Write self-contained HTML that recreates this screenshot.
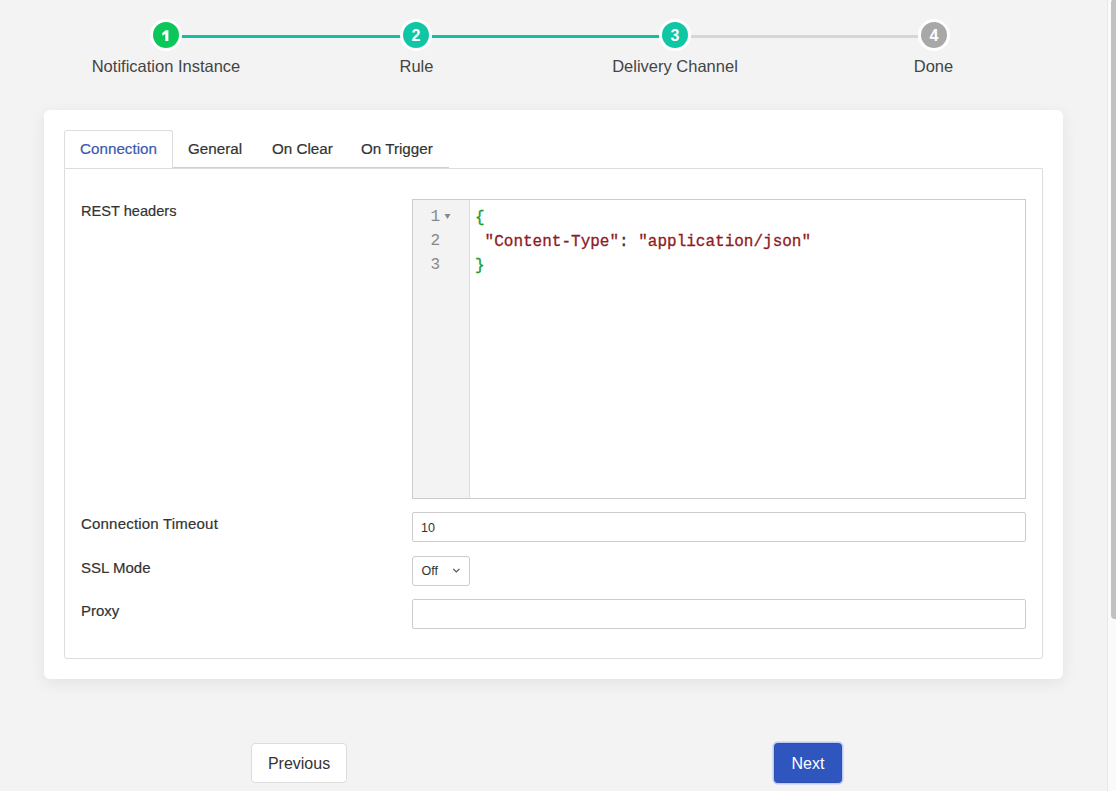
<!DOCTYPE html>
<html><head><meta charset="utf-8">
<style>
html,body{margin:0;padding:0;}
body{width:1116px;height:791px;overflow:hidden;background:#f3f3f3;font-family:"Liberation Sans",sans-serif;color:#333;position:relative;}
.abs{position:absolute;}
.step{position:absolute;top:19px;width:32px;height:32px;border-radius:50%;background:#fff;}
.step .c{position:absolute;left:3px;top:3px;width:26px;height:26px;border-radius:50%;color:#fff;font-weight:bold;font-size:16px;line-height:27px;text-align:center;}
.line{position:absolute;top:35px;height:3px;}
.slabel{position:absolute;top:55.8px;font-size:16.5px;line-height:20px;color:#444;white-space:nowrap;transform:translateX(-50%);}
.card{position:absolute;left:44px;top:110px;width:1019px;height:569px;background:#fff;border-radius:6px;box-shadow:0 4px 16px rgba(0,0,0,0.07);}
.tab{position:absolute;top:130px;height:38px;font-size:15.2px;line-height:37px;color:#333;white-space:nowrap;-webkit-text-stroke:0.2px currentColor;}
.tab.active{border:1px solid #ddd;border-bottom:none;border-radius:3px 3px 0 0;background:#fff;color:#3a5aae;box-sizing:border-box;}
.panel{position:absolute;left:64px;top:168px;width:979px;height:491px;border:1px solid #ddd;border-radius:0 0 3px 3px;box-sizing:border-box;}
.lbl{position:absolute;left:81px;font-size:15px;line-height:18px;color:#333;white-space:nowrap;-webkit-text-stroke:0.2px #333;}
.editor{position:absolute;left:412px;top:199px;width:614px;height:300px;border:1px solid #ccc;box-sizing:border-box;background:#fff;font-family:"Liberation Mono",monospace;font-size:16px;}
.gutter{position:absolute;left:0;top:0;width:56px;height:298px;background:#f3f3f3;border-right:1px solid #ddd;}
.ln{position:absolute;left:0;width:27px;text-align:right;color:#888;line-height:24px;font-size:16px;}
.code{position:absolute;left:62px;line-height:24px;white-space:pre;-webkit-text-stroke:0.3px currentColor;}
.str{color:#8f1a1f;}
.br{color:#1a9a30;}
.input{position:absolute;left:412px;width:614px;height:30px;border:1px solid #ccc;border-radius:2px;box-sizing:border-box;background:#fff;font-size:12.5px;}
.btn{position:absolute;top:743px;height:40px;border-radius:4px;font-size:16px;line-height:40px;text-align:center;box-sizing:border-box;}
</style></head><body>
<!-- stepper -->
<div class="line" style="left:181px;width:220px;background:#12bfa2;"></div>
<div class="line" style="left:431px;width:229px;background:#12bfa2;"></div>
<div class="line" style="left:690px;width:229px;background:#d6d6d6;"></div>
<div class="step" style="left:150px;"><div class="c" style="background:#0bc75a;"><svg class="abs" style="left:0;top:0" width="26" height="26" viewBox="0 0 26 26"><path d="M15.4 8.2 L15.4 19.1 L12.3 19.1 L12.3 12.0 L9.3 13.7 L9.3 11.0 L12.7 8.2 Z" fill="#fff"/></svg></div></div>
<div class="step" style="left:400px;"><div class="c" style="background:#10c6a4;">2</div></div>
<div class="step" style="left:659px;"><div class="c" style="background:#10c6a4;">3</div></div>
<div class="step" style="left:918px;"><div class="c" style="background:#a8a8a8;">4</div></div>
<div class="slabel" style="left:166px;">Notification Instance</div>
<div class="slabel" style="left:416.5px;">Rule</div>
<div class="slabel" style="left:675px;">Delivery Channel</div>
<div class="slabel" style="left:933.5px;">Done</div>

<div class="card"></div>
<div class="panel"></div>
<div class="abs" style="left:173px;top:167px;width:276px;height:1px;background:#cfcfcf;"></div>
<div class="tab active" style="left:64px;width:109px;height:38px;text-align:center;line-height:36px;">Connection</div>
<div class="tab" style="left:188px;">General</div>
<div class="tab" style="left:272px;">On Clear</div>
<div class="tab" style="left:361px;">On Trigger</div>

<div class="lbl" style="top:202px;font-size:14.6px;">REST headers</div>
<div class="editor">
  <div class="gutter">
    <div class="ln" style="top:5px;">1</div>
    <div class="ln" style="top:29px;">2</div>
    <div class="ln" style="top:53px;">3</div>
    <svg class="abs" style="left:31px;top:13px;" width="7" height="7" viewBox="0 0 7 7"><path d="M0.5 1 L6.5 1 L3.5 6 Z" fill="#888"/></svg>
  </div>
  <div class="code" style="top:6px;"><span class="br">{</span>
 <span class="str">"Content-Type"</span>: <span class="str">"application/json"</span>
<span class="br">}</span></div>
</div>

<div class="lbl" style="top:515px;letter-spacing:0.2px;">Connection Timeout</div>
<div class="input" style="top:512px;"><span class="abs" style="left:8px;top:7.5px;">10</span></div>
<div class="lbl" style="top:558.5px;">SSL Mode</div>
<div class="input" style="top:556px;width:58px;border-radius:3px;"><span class="abs" style="left:8.5px;top:6.5px;">Off</span>
  <svg class="abs" style="left:38.5px;top:10px;" width="9" height="7" viewBox="0 0 9 7"><path d="M1.2 1.9 L4.3 4.9 L7.4 1.9" fill="none" stroke="#555" stroke-width="1.3"/></svg></div>
<div class="lbl" style="top:601.5px;">Proxy</div>
<div class="input" style="top:599px;"></div>

<div class="btn" style="left:251px;width:96px;background:#fff;border:1px solid #ddd;color:#333;">Previous</div>
<div class="btn" style="left:774px;width:68px;background:#2f55bf;color:#fff;border:1px solid #2b4fb5;box-shadow:0 0 0 1.5px #bdcbf5;border-radius:3.5px;">Next</div>

<!-- scrollbar -->
<div class="abs" style="left:1107px;top:0;width:9px;height:791px;background:#fafafa;border-left:1px solid #e8e8e8;box-sizing:border-box;"></div>
<div class="abs" style="left:1111px;top:-1px;width:8px;height:620px;background:#c1c1c1;border-radius:4px;"></div>
</body></html>
